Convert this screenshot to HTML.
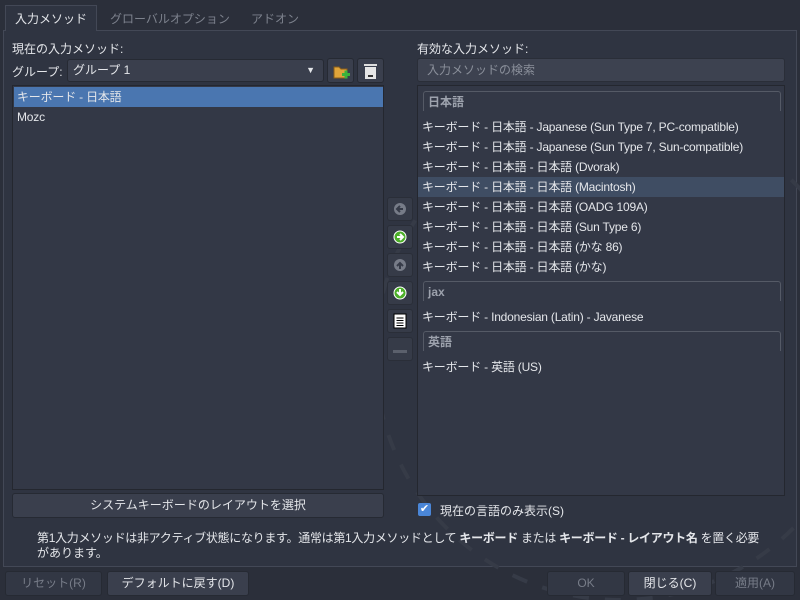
<!DOCTYPE html>
<html><head><meta charset="utf-8"><style>
*{box-sizing:border-box;margin:0;padding:0}
html,body{overflow:hidden}
body{width:800px;height:600px;overflow:hidden;background:#2b2f3a;font-family:"Liberation Sans","Noto Sans CJK JP",sans-serif;font-size:12px;color:#e4e6ea;position:relative}
.a{position:absolute;white-space:nowrap}
.panel{position:absolute;left:3px;top:30px;width:794px;height:537px;background:#2f3441;border:1px solid #434856}
.btn{position:absolute;background:#3a3f4d;border:1px solid #262a33;border-radius:3px;text-align:center;line-height:23px}
.dis{color:#777c88;background:#323744}
.list{position:absolute;background:#333846;border:1px solid #24272f;overflow:hidden}
.row{position:absolute;left:4px;height:20px;line-height:20px;white-space:nowrap;letter-spacing:-0.2px}
.hdr{position:absolute;left:5px;width:358px;height:20px;border:1px solid #555a66;border-bottom:none;border-radius:3px 3px 0 0;color:#9da2ad;padding-left:4px;line-height:20px;font-weight:bold}
.mb{position:absolute;left:387px;width:26px;height:24px;background:#363b48;border:1px solid #2a2e38;border-radius:3px}
</style></head><body>
<div class="a" style="left:5px;top:5px;width:92px;height:26px;background:#2f3441;border:1px solid #434856;border-bottom:none;z-index:2"></div>
<div class="panel"></div>
<svg class="a" style="left:0;top:0" width="800" height="600"><circle cx="620" cy="355" r="245" fill="none" stroke="#363b47" stroke-width="4" stroke-dasharray="16 16"/></svg>
<div class="a" style="left:15px;top:10px;font-size:12px;z-index:3">入力メソッド</div>
<div class="a" style="left:110px;top:10px;font-size:12px;color:#7d828d">グローバルオプション</div>
<div class="a" style="left:251px;top:10px;font-size:12px;color:#7d828d">アドオン</div>

<div class="a" style="left:12px;top:40px">現在の入力メソッド:</div>
<div class="a" style="left:12px;top:63px">グループ:</div>
<div class="btn" style="left:67px;top:59px;width:257px;height:23px;text-align:left;padding-left:5px;line-height:21px">グループ 1<span style="position:absolute;right:8px;top:0;font-size:9px">▼</span></div>
<div class="btn" style="left:327px;top:58px;width:27px;height:25px"><svg width="25" height="23"><path d="M6 8h5l2 2h6v9H6z" fill="#e0a53a" stroke="#8a5e1a"/><rect x="14" y="14" width="8" height="3" fill="#3bb33b"/><rect x="16.5" y="11.5" width="3" height="8" fill="#3bb33b"/></svg></div>
<div class="btn" style="left:357px;top:58px;width:27px;height:25px"><svg width="25" height="23"><rect x="6" y="5" width="13" height="2" fill="#ddd"/><rect x="7" y="8" width="11" height="12" fill="#e6e6e6"/><rect x="10" y="16" width="5" height="2" fill="#333"/></svg></div>

<div class="list" style="left:12px;top:85px;width:372px;height:405px">
<div class="a" style="left:1px;top:1px;width:369px;height:20px;background:#4a76b0"></div>
<div class="row" style="top:1px">キーボード - 日本語</div>
<div class="row" style="top:21px">Mozc</div>
</div>
<div class="btn" style="left:12px;top:493px;width:372px;height:25px">システムキーボードのレイアウトを選択</div>

<div class="mb" style="top:197px"><svg width="24" height="22"><circle cx="12" cy="11" r="6" fill="#777c88"/><path d="M15 11H9m3-3l-3 3 3 3" stroke="#363b48" stroke-width="2" fill="none"/></svg></div>
<div class="mb" style="top:225px"><svg width="24" height="22"><circle cx="12" cy="11" r="6" fill="#4caf28" stroke="#fff" stroke-width="1"/><path d="M9 11h6m-3-3l3 3-3 3" stroke="#fff" stroke-width="2" fill="none"/></svg></div>
<div class="mb" style="top:253px"><svg width="24" height="22"><circle cx="12" cy="11" r="6" fill="#777c88"/><path d="M12 15V9m-3 3l3-3 3 3" stroke="#363b48" stroke-width="2" fill="none"/></svg></div>
<div class="mb" style="top:281px"><svg width="24" height="22"><circle cx="12" cy="11" r="6" fill="#4caf28" stroke="#fff" stroke-width="1"/><path d="M12 7v6m-3-3l3 3 3-3" stroke="#fff" stroke-width="2" fill="none"/></svg></div>
<div class="mb" style="top:309px"><svg width="24" height="22"><rect x="6" y="4" width="12" height="14" fill="#fff" stroke="#000"/><path d="M8.5 8h7M8.5 10.5h7M8.5 13h7M8.5 15.5h7" stroke="#000"/></svg></div>
<div class="mb" style="top:337px"><svg width="24" height="22"><rect x="5" y="12" width="14" height="3" fill="#5b606c"/></svg></div>

<div class="a" style="left:417px;top:40px">有効な入力メソッド:</div>
<div class="a" style="left:417px;top:58px;width:368px;height:24px;background:#3d4250;border:1px solid #2a2e38;border-radius:3px;color:#8a8f9a;padding-left:9px;line-height:22px">入力メソッドの検索</div>
<div class="list" style="left:417px;top:85px;width:368px;height:411px">
<div class="hdr" style="top:5px">日本語</div>
<div class="row" style="top:31px">キーボード - 日本語 - Japanese (Sun Type 7, PC-compatible)</div>
<div class="row" style="top:51px">キーボード - 日本語 - Japanese (Sun Type 7, Sun-compatible)</div>
<div class="row" style="top:71px">キーボード - 日本語 - 日本語 (Dvorak)</div>
<div class="a" style="left:0;top:91px;width:366px;height:20px;background:#3f4d63"></div>
<div class="row" style="top:91px">キーボード - 日本語 - 日本語 (Macintosh)</div>
<div class="row" style="top:111px">キーボード - 日本語 - 日本語 (OADG 109A)</div>
<div class="row" style="top:131px">キーボード - 日本語 - 日本語 (Sun Type 6)</div>
<div class="row" style="top:151px">キーボード - 日本語 - 日本語 (かな 86)</div>
<div class="row" style="top:171px">キーボード - 日本語 - 日本語 (かな)</div>
<div class="hdr" style="top:195px">jax</div>
<div class="row" style="top:221px">キーボード - Indonesian (Latin) - Javanese</div>
<div class="hdr" style="top:245px">英語</div>
<div class="row" style="top:271px">キーボード - 英語 (US)</div>
</div>
<div class="a" style="left:418px;top:503px;width:13px;height:13px;background:#4a86d8;border-radius:2px;color:#fff;font-size:11px;line-height:13px;text-align:center">✔</div>
<div class="a" style="left:440px;top:502px">現在の言語のみ表示(S)</div>

<div class="a" style="left:37px;top:529px;letter-spacing:-0.3px">第1入力メソッドは非アクティブ状態になります。通常は第1入力メソッドとして <b>キーボード</b> または <b>キーボード - レイアウト名</b> を置く必要</div>
<div class="a" style="left:37px;top:544px">があります。</div>

<div class="btn dis" style="left:5px;top:571px;width:97px;height:25px">リセット(R)</div>
<div class="btn" style="left:107px;top:571px;width:142px;height:25px">デフォルトに戻す(D)</div>
<div class="btn dis" style="left:547px;top:571px;width:78px;height:25px">OK</div>
<div class="btn" style="left:628px;top:571px;width:84px;height:25px">閉じる(C)</div>
<div class="btn dis" style="left:715px;top:571px;width:80px;height:25px">適用(A)</div>
</body></html>
